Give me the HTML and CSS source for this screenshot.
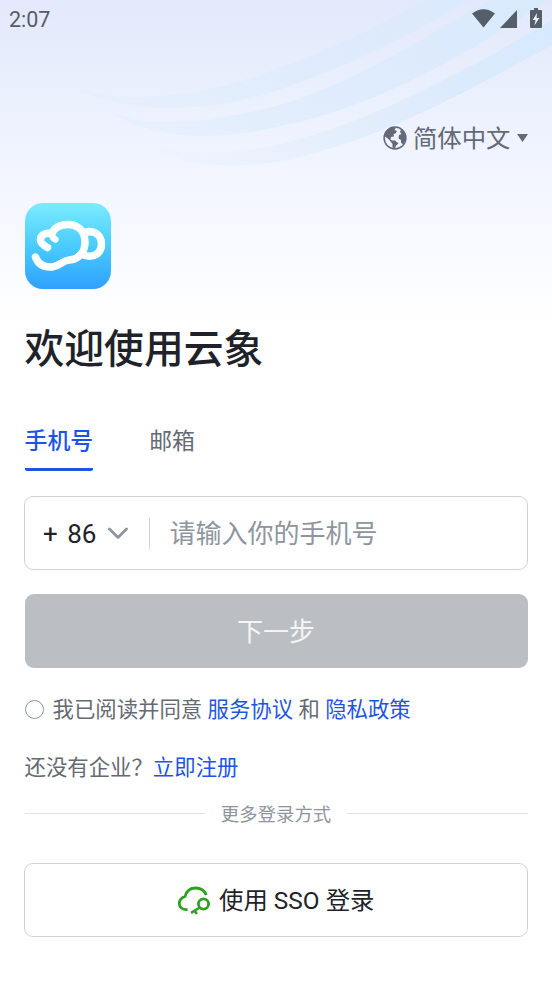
FILE: index.html
```html
<!DOCTYPE html>
<html lang="zh-CN">
<head>
<meta charset="utf-8">
<title>云象</title>
<link rel="stylesheet" href="styles.css">
</head>
<body>
<svg class="waves" viewBox="0 0 552 200" aria-hidden="true">
  <defs>
    <linearGradient id="wave" gradientUnits="userSpaceOnUse" x1="70" y1="0" x2="552" y2="0">
      <stop offset="0" stop-color="#dcecfb" stop-opacity=".2"/>
      <stop offset=".4" stop-color="#dcebfc" stop-opacity=".6"/>
      <stop offset="1" stop-color="#d9eafd"/>
    </linearGradient>
    <linearGradient id="wave-low" gradientUnits="userSpaceOnUse" x1="140" y1="0" x2="552" y2="0">
      <stop offset="0" stop-color="#e2edfb" stop-opacity=".1"/>
      <stop offset=".35" stop-color="#e2edfb" stop-opacity=".5"/>
      <stop offset=".65" stop-color="#dfecfc"/>
      <stop offset="1" stop-color="#d6e9fe"/>
    </linearGradient>
  </defs>
  <path fill="url(#wave)" d="M74 87C130 108 215 93 276 69C330 50 376 28 424 0H470C405 38 345 68 276 91C205 114 125 115 74 87Z"/>
  <path fill="url(#wave)" d="M110 112C160 131 225 119 276 106C340 88 405 50 490 0H548C455 63 365 110 276 127C215 142 150 139 110 112Z"/>
  <path fill="url(#wave-low)" d="M148 144C185 157 225 154 276 145C360 125 420 92 490 56L552 20V45C460 95 375 143 276 162C220 170 175 164 148 144Z"/>
</svg>
<div class="screen">
  <div class="status">
    <span>2:07</span>
    <svg width="72" height="22" viewBox="0 0 72 22" fill="#555e69">
      <path d="M1 5.5Q12.500 -3 24 5.500L12.500 19.500Z"/>
      <path d="M29 20L46 2V20Z"/>
      <path d="M60 2H63V0H67V2H70Q71 2 71 3V19Q71 20 70 20H60Q59 20 59 19V3Q59 2 60 2Z"/>
      <path d="M66 5L61.700 12H64.500L63.500 17.500L68.300 10H65.500Z" fill="#edf3fd"/>
    </svg>
  </div>

  <div class="language">
    <svg width="24" height="24" viewBox="0 0 24 24">
      <circle cx="12" cy="12" r="10.900" fill="none" stroke="#626a77" stroke-width="1.500"/>
      <path fill="#626a77" d="M1.500 10L3 6L7 2L13 1.500L11.500 4L14 5L12.500 7.500L10.500 8L11 10.500L8 11L7.500 13.500L9 14.500L12 14.500L15.500 17.500L13 19.500L12 22.500L9.500 21.500V18L6 13.500ZM18 3.500L21 6L22.700 10V14L20 18.500L18 16.500V14L15.500 12.500L16 9L18.500 8L17 6Z"/>
    </svg>
    <span>简体中文</span>
    <svg class="caret" width="11" height="8" viewBox="0 0 11 8"><path d="M0 0H11L5.500 8Z" fill="#626a77"/></svg>
  </div>

  <svg class="logo" width="86" height="86" viewBox="0 0 86 86">
    <defs>
      <linearGradient id="sky" x1="0" y1="0" x2="0" y2="1">
        <stop offset="0" stop-color="#7cebff"/>
        <stop offset=".5" stop-color="#4accfd"/>
        <stop offset="1" stop-color="#2fa0ff"/>
      </linearGradient>
    </defs>
    <rect width="86" height="86" rx="18" fill="url(#sky)"/>
    <g fill="none" stroke="#fff" stroke-width="7.500" stroke-linecap="round" stroke-linejoin="round">
      <path d="M10.500 54C13 61 19 64.500 27 64C35 63 37 57.500 44 57C54 56.500 60 49 60 39C60 28 53 21.500 43 21.500C35 21.500 29 25 26.500 31C20 28.500 15 33 15.500 37.500C16 41 19 42.500 22.500 44.500" />
      <path d="M26.500 31C27.500 32 27 35 30.500 36.500" stroke-width="6.500"/>
      <path d="M60 29.500C69 26.500 76.500 32 76.500 41C76.500 50 69 55 60 52.500"/>
    </g>
  </svg>

  <h1>欢迎使用云象</h1>

  <div class="tabs">
    <span class="tab active">手机号</span>
    <span class="tab">邮箱</span>
  </div>

  <div class="phone">
    <span class="code">+ 86</span>
    <svg class="chevron" width="20" height="13" viewBox="0 0 20 13"><path d="M1.500 2L10 10.500L18.500 2" fill="none" stroke="#8f959e" stroke-width="2.800" stroke-linecap="round" stroke-linejoin="round"/></svg>
    <span class="rule"></span>
    <span class="placeholder">请输入你的手机号</span>
  </div>

  <div class="next">下一步</div>

  <div class="agree">
    <span class="radio"></span>
    <span>我已阅读并同意 <a>服务协议</a> 和 <a>隐私政策</a></span>
  </div>

  <div class="register">还没有企业？<a>立即注册</a></div>

  <div class="more"><span>更多登录方式</span></div>

  <div class="sso">
    <svg width="34" height="29" viewBox="0 0 34 29" fill="none" stroke="#2ea121" stroke-width="2.800">
      <path d="M10.500 23.500C5 24 2.300 21 2.300 17.500C2.300 14 5 11.500 8 10.500C9.500 5 13.500 2 18.500 2C23.500 2 27.500 4.500 29.300 9"/>
      <circle cx="26.500" cy="18" r="5.100"/>
      <path d="M22.800 21.500L14 26.800M17.500 24.500L19.800 28" stroke-width="2.600"/>
    </svg>
    <span>使用 SSO 登录</span>
  </div>
</div>
</body>
</html>
```
FILE: styles.css
```css
* { box-sizing: border-box; }

body {
  margin: 0;
  height: 983px;
  overflow: hidden;
  background: linear-gradient(#e4e8fc 0, #e8eefc 70px, #f0f4ff 150px, #f9faff 250px, #fff 325px);
  font-family: Roboto, "Noto Sans CJK SC", sans-serif;
  color: #1f2329;
}

a { color: #1d55e2; }

.waves {
  position: absolute;
  top: 0;
  left: 0;
  width: 552px;
  height: 200px;
}

.screen {
  position: relative;
  display: flex;
  flex-direction: column;
  padding: 0 24.500px;
}

.status {
  display: flex;
  justify-content: space-between;
  align-items: center;
  height: 38px;
  margin: 0 -15.500px;
  color: #555e69;
  font-size: 21.500px;
}

.status svg { margin-top: -1px; }

.language {
  display: flex;
  justify-content: flex-end;
  align-items: center;
  height: 36px;
  margin-top: 83px;
  line-height: 36px;
  color: #626a77;
  font-size: 24.400px;
}

.language svg { margin-bottom: 3px; }

.language span { margin: 0 6px; }

.logo { margin: 46px 0 0 .300px; }

h1 {
  margin: 32px 0 0;
  font-size: 39.800px;
  line-height: 58px;
  font-weight: 500;
}

.tabs {
  display: flex;
  gap: 56px;
  margin-top: 44px;
  font-size: 22.900px;
}

.tab {
  height: 48px;
  line-height: 38px;
  color: #646a73;
}

.active {
  color: #1d55e2;
  font-weight: 500;
  border-bottom: 3px solid #1d55e2;
  border-radius: 2px;
}

.phone {
  display: flex;
  align-items: center;
  height: 74px;
  margin: 25px 0 0 -.500px;
  padding: 0 18px;
  background: #fff;
  border: 1.500px solid #d0d3d6;
  border-radius: 9px;
  font-size: 26px;
}

.code {
  margin-top: 1px;
  word-spacing: 3px;
}

.chevron { margin-left: 12px; }

.rule {
  width: 1px;
  height: 31px;
  margin: 0 19px 0 21px;
  background: #d0d3d6;
}

.placeholder {
  margin-top: -3px;
  color: #8f959e;
}

.next {
  height: 74px;
  margin-top: 24px;
  border-radius: 9px;
  background: #bbbfc4;
  color: #f4f5f6;
  font-size: 26px;
  line-height: 76px;
  text-align: center;
}

.agree {
  display: flex;
  align-items: center;
  gap: 9px;
  height: 32px;
  margin: 25px 0 0;
  color: #646a73;
  font-size: 21.400px;
  line-height: 32px;
  white-space: nowrap;
}

.agree span:last-child { margin-top: 1px; }

.radio {
  width: 19px;
  height: 19px;
  border: 1.500px solid #8f959e;
  border-radius: 50%;
}

.register {
  height: 32px;
  margin-top: 27px;
  line-height: 32px;
  color: #646a73;
  font-size: 21.400px;
}

.more {
  display: flex;
  align-items: center;
  gap: 16px;
  height: 28px;
  margin-top: 15px;
  color: #8f959e;
  font-size: 18.400px;
}

.more::before,
.more::after {
  content: "";
  flex: 1;
  height: 1px;
  background: #dee0e3;
}

.sso {
  display: flex;
  justify-content: center;
  align-items: center;
  gap: 8px;
  height: 74px;
  margin: 36px 0 0 -.500px;
  border: 1.500px solid #d0d3d6;
  border-radius: 9px;
  font-size: 24.400px;
}

.sso span { margin-top: -3px; }
```
